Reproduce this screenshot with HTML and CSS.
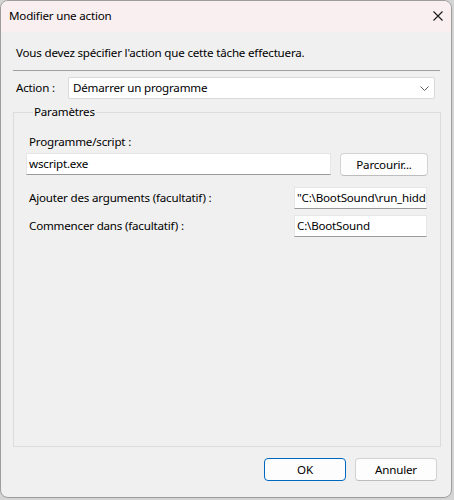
FILE: index.html
```html
<!DOCTYPE html>
<html lang="fr">
<head>
<meta charset="utf-8">
<title>Modifier une action</title>
<link rel="stylesheet" href="styles.css">
</head>
<body>
<div class="window">
  <div class="titlebar">
    <span class="title">Modifier une action</span>
    <span class="close">
      <svg width="10" height="10" viewBox="0 0 10 10"><path d="M0.5 0.5 L9.5 9.5 M9.5 0.5 L0.5 9.5" stroke="#1a1a1a" stroke-width="1.1" fill="none"/></svg>
    </span>
  </div>
  <div class="content">
    <div class="intro">Vous devez spécifier l'action que cette tâche effectuera.</div>
    <div class="sep"></div>
    <div class="action-row">
      <span class="action-label">Action :</span>
      <div class="combo">
        <span>Démarrer un programme</span>
        <svg class="chev" width="9" height="5" viewBox="0 0 9 5"><path d="M0.5 0.5 L4.5 4.5 L8.5 0.5" stroke="#5a5a5a" stroke-width="1" fill="none"/></svg>
      </div>
    </div>
    <fieldset class="group">
      <legend>Paramètres</legend>
      <div class="lbl prog">Programme/script :</div>
      <div class="row1">
        <div class="field wide">wscript.exe</div>
        <div class="btn browse">Parcourir...</div>
      </div>
      <div class="row2">
        <div class="lbl">Ajouter des arguments (facultatif) :</div>
        <div class="field narrow">"C:\BootSound\run_hidden.vbs"</div>
      </div>
      <div class="row3">
        <div class="lbl">Commencer dans (facultatif) :</div>
        <div class="field narrow">C:\BootSound</div>
      </div>
    </fieldset>
    <div class="buttons">
      <div class="btn ok">OK</div>
      <div class="btn">Annuler</div>
    </div>
  </div>
</div>
</body>
</html>
```

FILE: styles.css
```css
html, body {
  margin: 0;
  padding: 0;
  background: #d4d4d4;
}
body {
  font-family: "Noto Sans", "Open Sans", sans-serif;
  font-size: 11.6px;
  letter-spacing: -0.2px;
  line-height: 16px;
  color: #000;
}
.window {
  box-sizing: border-box;
  width: 452px;
  height: 498px;
  border: 1px solid #9c9c9c;
  border-radius: 8px;
  background: #f0f0f0;
  overflow: hidden;
  display: flex;
  flex-direction: column;
}
.titlebar {
  height: 31px;
  background: #f9eff0;
  display: flex;
  align-items: center;
  justify-content: space-between;
  padding: 0 8px 1px 8px;
  box-sizing: border-box;
  flex: none;
}
.close {
  display: flex;
}
.content {
  flex: 1;
  display: flex;
  flex-direction: column;
  padding: 13px 10px 0 12px;
}
.intro {
  padding-left: 3px;
  height: 16px;
}
.sep {
  margin-top: 9px;
  height: 1px;
  background: #a0a0a0;
  margin-right: 1px;
}
.action-row {
  display: flex;
  align-items: center;
  margin-top: 6px;
}
.action-label {
  width: 52px;
  padding-left: 3px;
  flex: none;
}
.combo {
  box-sizing: border-box;
  width: 367px;
  height: 22px;
  background: #fff;
  border: 1px solid #d9d9d9;
  border-radius: 2px;
  display: flex;
  align-items: center;
  justify-content: space-between;
  padding: 0 5px 0 4px;
}
.chev { display: block; }
.group {
  margin: 5px 0 0 0;
  border: 1px solid #dcdcdc;
  padding: 14px 13px 0 12px;
  height: 343px;
  box-sizing: border-box;
  min-width: 0;
  width: 428px;
}
.group legend {
  padding: 0 1px;
  margin-left: 7px;
}
.lbl {
  padding-left: 3px;
}
.prog {
  height: 16px;
}
.row1 {
  display: flex;
  justify-content: space-between;
  align-items: flex-start;
  margin-top: 3px;
}
.field {
  box-sizing: border-box;
  height: 22px;
  background: #fff;
  border: 1px solid #e6e6e6;
  border-bottom-color: #9b9b9b;
  padding: 2px 3px 0 2px;
  white-space: nowrap;
  overflow: hidden;
}
.wide { width: 305px; }
.narrow { width: 133px; }
.btn {
  box-sizing: border-box;
  width: 82px;
  height: 23px;
  background: #fdfdfd;
  border: 1px solid #d3d3d3;
  border-bottom-color: #bdbdbd;
  border-radius: 4px;
  display: flex;
  align-items: center;
  justify-content: center;
}
.browse {
  width: 88px;
  margin-right: -1px;
}
.row2, .row3 {
  display: flex;
  justify-content: space-between;
  align-items: center;
}
.row2 { margin-top: 11px; }
.row3 { margin-top: 6px; }
.buttons {
  display: flex;
  justify-content: flex-end;
  gap: 9px;
  margin-top: 11px;
  padding-right: 4px;
}
.ok {
  border: 1px solid #0067c0;
}
```
